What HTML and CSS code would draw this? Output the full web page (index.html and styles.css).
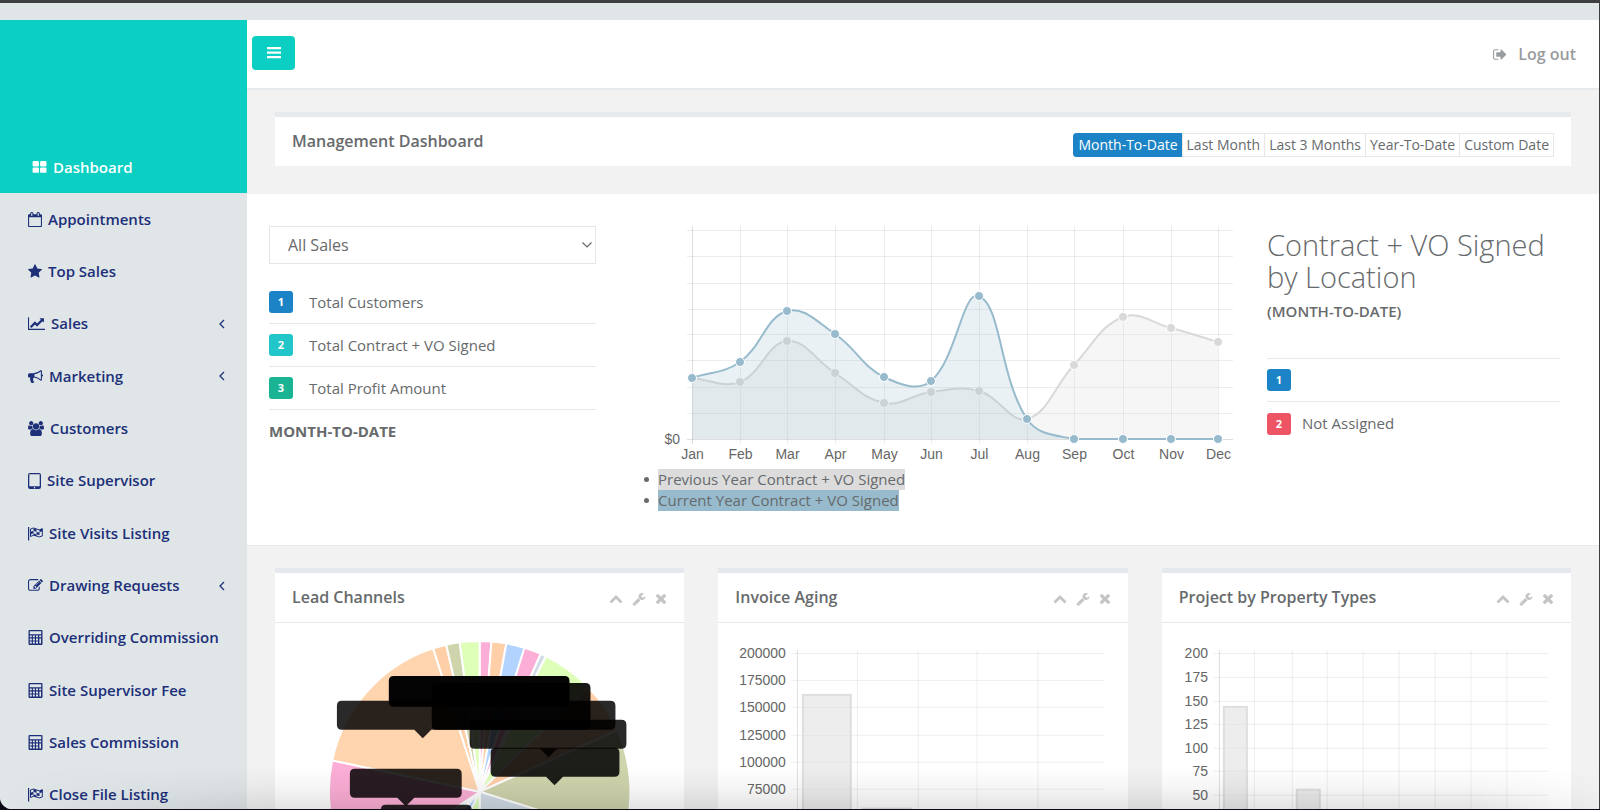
FILE: index.html
```html
<!DOCTYPE html>
<html lang="en">
<head>
<meta charset="utf-8">
<title>Management Dashboard</title>
<link rel="stylesheet" href="styles.css">
</head>
<body>
<svg class="sprite" aria-hidden="true">
  <symbol id="i-th" viewBox="0 0 1792 1792"><path d="M832 1024v384q0 52-38 90t-90 38h-512q-52 0-90-38t-38-90v-384q0-52 38-90t90-38h512q52 0 90 38t38 90zm0-768v384q0 52-38 90t-90 38h-512q-52 0-90-38t-38-90v-384q0-52 38-90t90-38h512q52 0 90 38t38 90zm896 768v384q0 52-38 90t-90 38h-512q-52 0-90-38t-38-90v-384q0-52 38-90t90-38h512q52 0 90 38t38 90zm0-768v384q0 52-38 90t-90 38h-512q-52 0-90-38t-38-90v-384q0-52 38-90t90-38h512q52 0 90 38t38 90z"/></symbol>
  <symbol id="i-calendar" viewBox="0 0 1664 1792"><path fill-rule="evenodd" d="M128 1664h1408V640H128zM1664 384v1280q0 52-38 90t-90 38H128q-52 0-90-38t-38-90V384q0-52 38-90t90-38h128v-96q0-66 47-113T416 0h64q66 0 113 47t47 113v96h384v-96q0-66 47-113t113-47h64q66 0 113 47t47 113v96h128q52 0 90 38t38 90zM384 160v288q0 32 32 32h64q32 0 32-32V160q0-32-32-32h-64q-32 0-32 32zm768 0v288q0 32 32 32h64q32 0 32-32V160q0-32-32-32h-64q-32 0-32 32z"/></symbol>
  <symbol id="i-star" viewBox="64 0 1664 1792"><path d="M1728 647q0 22-26 48l-363 354 86 500q1 7 1 20 0 21-10.500 35.500t-30.500 14.500q-19 0-40-12l-449-236-449 236q-22 12-40 12-21 0-31.500-14.500t-10.500-35.500q0-6 2-20l86-500-364-354q-25-27-25-48 0-37 56-46l502-73 225-455q19-41 49-41t49 41l225 455 502 73q56 9 56 46z"/></symbol>
  <symbol id="i-line" viewBox="0 0 2048 1792"><path d="M2048 1536v128h-2048v-1536h128v1408h1920zm-128-1248v435q0 21-19.500 29.500t-35.500-7.500l-121-121-633 633q-10 10-23 10t-23-10l-233-233-416 416-192-192 585-585q10-10 23-10t23 10l233 233 464-464-121-121q-16-16-7.500-35.500t29.500-19.500h435q14 0 23 9t9 23z"/></symbol>
  <symbol id="i-horn" viewBox="0 0 1792 1792"><path d="M1664 640q53 0 90.500 37.500t37.500 90.500-37.500 90.500-90.500 37.500v384q0 52-38 90t-90 38q-417-347-812-380-58 19-91 66t-31 100.500 40 92.500q-20 33-23 65.500t6 58 33.500 55 48 50 61.500 50.500q-29 58-111.500 83t-168.500 11.500-132-55.500q-7-23-29.500-87.500t-32-94.500-23-89-15-101 3.500-98.500 22-110.500h-122q-66 0-113-47t-47-113v-192q0-66 47-113t113-47h480q435 0 896-384 52 0 90 38t38 90v384zm-128 604v-954q-394 302-768 343v270q377 42 768 341z"/></symbol>
  <symbol id="i-users" viewBox="0 0 1920 1792"><path d="M593 896q-162 5-265 128h-134q-82 0-138-40.500t-56-118.500q0-353 124-353 6 0 43.500 21t97.500 42.500 119 21.500q67 0 133-23-5 37-5 66 0 139 81 256zm1071 637q0 120-73 189.500t-194 69.500h-874q-121 0-194-69.500t-73-189.500q0-53 3.500-103.500t14-109 26.500-108.500 43-97.500 62-81 85.500-53.500 111.500-20q10 0 43 21.500t73 48 107 48 135 21.500 135-21.500 107-48 73-48 43-21.500q61 0 111.500 20t85.500 53.500 62 81 43 97.500 26.500 108.500 14 109 3.500 103.500zm-1024-1277q0 106-75 181t-181 75-181-75-75-181 75-181 181-75 181 75 75 181zm704 384q0 159-112.500 271.500t-271.500 112.500-271.500-112.500-112.500-271.500 112.500-271.500 271.500-112.500 271.500 112.500 112.500 271.500zm576 225q0 78-56 118.500t-138 40.500h-134q-103-123-265-128 81-117 81-256 0-29-5-66 66 23 133 23 59 0 119-21.500t97.500-42.500 43.500-21q124 0 124 353zm-128-609q0 106-75 181t-181 75-181-75-75-181 75-181 181-75 181 75 75 181z"/></symbol>
  <symbol id="i-tablet" viewBox="0 0 13 16"><path fill-rule="evenodd" d="M2 0h9q2 0 2 2v12q0 2-2 2H2q-2 0-2-2V2q0-2 2-2zM1.300 1.300v11.900h10.400V1.300zM6.500 13.900a.7.7 0 1 0 .01 0z"/></symbol>
  <symbol id="i-flag" viewBox="0 0 15 15"><path d="M.6 1v13.500" stroke="currentColor" stroke-width="1.200" fill="none"/><path d="M2.500 3q3-2 6 0t5.800-.3v7.300q-3 1.800-5.800 0t-6 .5z" fill="none" stroke="currentColor"/><path d="M5.500 2.200q1.500 0 3 1v2.700q-1.500-1-3-1zM8.500 5.700q1.500.8 3 .5v2.700q-1.500.4-3-.6zM2.500 5.800q1.500-.8 3-.9v2.700q-1.500.1-3 .9zM11.500 3.500l2.800-.9v2.700l-2.800.9zM5.500 7.600q1.500 0 3 .8v2q-1.500-.9-3-.8z"/></symbol>
  <symbol id="i-edit" viewBox="0 0 1792 1792"><path d="M888 1184l116-116-152-152-116 116v56h96v96h56zm440-720q-16-16-33 1l-350 350q-17 17-1 33t33-1l350-350q17-17 1-33zm80 594v190q0 119-84.500 203.500t-203.500 84.500h-832q-119 0-203.500-84.500t-84.500-203.500v-832q0-119 84.500-203.500t203.500-84.500h832q63 0 117 25 15 7 18 23 3 17-9 29l-49 49q-14 14-32 8-23-6-45-6h-832q-66 0-113 47t-47 113v832q0 66 47 113t113 47h832q66 0 113-47t47-113v-126q0-13 9-22l64-64q15-15 35-7t20 29zm-96-738l288 288-672 672h-288v-288zm444 132l-92 92-288-288 92-92q28-28 68-28t68 28l152 152q28 28 28 68t-28 68z"/></symbol>
  <symbol id="i-calc" viewBox="0 0 14 15"><path fill-rule="evenodd" d="M1 0h12q1 0 1 1v13q0 1-1 1H1q-1 0-1-1V1q0-1 1-1zM1.300 1.300v2.900h11.400V1.300zM1.300 5.400v1.900h2V5.400zM4.400 5.400v1.900h2V5.400zM7.500 5.400v1.900h2V5.400zM10.700 5.400v1.900h2V5.400zM1.300 8.500v1.900h2V8.500zM4.400 8.500v1.900h2V8.500zM7.500 8.500v1.900h2V8.500zM10.900 8.500v5h1.600v-5zM1.300 11.600v1.900h2v-1.900zM4.400 11.600v1.900h2v-1.900zM7.500 11.600v1.900h2v-1.900z"/></symbol>
  <symbol id="i-left" viewBox="0 0 6 10"><path d="M5 1 1 5l4 4" fill="none" stroke="currentColor" stroke-width="1.300"/></symbol>
  <symbol id="i-bars" viewBox="0 0 14 12"><path d="M0 0h14v2.200H0zM0 4.500h14v2.200H0zM0 9h14v2.200H0z"/></symbol>
  <symbol id="i-out" viewBox="64 0 1664 1792"><path d="M704 1440q0 4 1 20t.5 26.500-3 23.500-10 19.500-20.500 6.500h-320q-119 0-203.500-84.500t-84.500-203.500v-704q0-119 84.500-203.500t203.500-84.500h320q13 0 22.500 9.500t9.500 22.500q0 4 1 20t.5 26.500-3 23.500-10 19.500-20.500 6.500h-320q-66 0-113 47t-47 113v704q0 66 47 113t113 47h312l11.500 1 11.500 3 8 5.500 7 9 2 13.500zm928-544q0 26-19 45l-544 544q-19 19-45 19t-45-19-19-45v-288h-448q-26 0-45-19t-19-45v-384q0-26 19-45t45-19h448v-288q0-26 19-45t45-19 45 19l544 544q19 19 19 45z"/></symbol>
  <symbol id="i-up" viewBox="0 0 14 14"><path d="M1.500 10.500 7 5l5.500 5.500" fill="none" stroke="currentColor" stroke-width="2.800"/></symbol>
  <symbol id="i-wrench" viewBox="0 0 1792 1792"><path d="M448 1472q0-26-19-45t-45-19-45 19-19 45 19 45 45 19 45-19 19-45zm644-420l-682 682q-37 37-90 37-52 0-91-37l-106-108q-38-36-38-90 0-53 38-91l681-681q39 98 114.500 173.500t173.500 114.500zm634-435q0 39-23 106-47 134-164.500 217.500t-258.500 83.500q-185 0-316.500-131.500t-131.500-316.500 131.500-316.500 316.500-131.500q58 0 121.500 16.500t107.500 46.500q16 11 16 28t-16 28l-293 169v224l193 107q5-3 79-48.500t135.500-81 70.500-35.500q15 0 23.500 10t8.500 25z"/></symbol>
  <symbol id="i-times" viewBox="256 256 1280 1408"><path d="M1490 1322q0 40-28 68l-136 136q-28 28-68 28t-68-28l-294-294-294 294q-28 28-68 28t-68-28l-136-136q-28-28-28-68t28-68l294-294-294-294q-28-28-28-68t28-68l136-136q28-28 68-28t68 28l294 294 294-294q28-28 68-28t68 28l136 136q28 28 28 68t-28 68l-294 294 294 294q28 28 28 68z"/></symbol>
</svg>

<div class="window">
  <div class="strip"></div>
  <div class="app">
    <nav class="sidebar">
      <div class="brand">
        <a class="nav-link active" href="#"><svg class="icon w15"><use href="#i-th"/></svg>Dashboard</a>
      </div>
      <ul class="nav-list">
        <li><a class="nav-link" href="#"><svg class="icon w14"><use href="#i-calendar"/></svg>Appointments</a></li>
        <li><a class="nav-link" href="#"><svg class="icon w14"><use href="#i-star"/></svg>Top Sales</a></li>
        <li><a class="nav-link" href="#"><svg class="icon w17"><use href="#i-line"/></svg>Sales<svg class="arrow"><use href="#i-left"/></svg></a></li>
        <li><a class="nav-link" href="#"><svg class="icon w15"><use href="#i-horn"/></svg>Marketing<svg class="arrow"><use href="#i-left"/></svg></a></li>
        <li><a class="nav-link" href="#"><svg class="icon w16"><use href="#i-users"/></svg>Customers</a></li>
        <li><a class="nav-link" href="#"><svg class="icon w13"><use href="#i-tablet"/></svg>Site Supervisor</a></li>
        <li><a class="nav-link" href="#"><svg class="icon w15"><use href="#i-flag"/></svg>Site Visits Listing</a></li>
        <li><a class="nav-link" href="#"><svg class="icon w15"><use href="#i-edit"/></svg>Drawing Requests<svg class="arrow"><use href="#i-left"/></svg></a></li>
        <li><a class="nav-link" href="#"><svg class="icon w15"><use href="#i-calc"/></svg>Overriding Commission</a></li>
        <li><a class="nav-link" href="#"><svg class="icon w15"><use href="#i-calc"/></svg>Site Supervisor Fee</a></li>
        <li><a class="nav-link" href="#"><svg class="icon w15"><use href="#i-calc"/></svg>Sales Commission</a></li>
        <li><a class="nav-link" href="#"><svg class="icon w15"><use href="#i-flag"/></svg>Close File Listing</a></li>
      </ul>
    </nav>

    <main class="main">
      <header class="topbar">
        <button class="menu-btn" type="button" aria-label="Toggle menu"><svg><use href="#i-bars"/></svg></button>
        <a class="logout" href="#"><svg><use href="#i-out"/></svg>Log out</a>
      </header>

      <section class="heading">
        <div class="heading-panel">
          <h1>Management Dashboard</h1>
          <div class="range">
            <button type="button" class="on">Month-To-Date</button><button type="button">Last Month</button><button type="button">Last 3 Months</button><button type="button">Year-To-Date</button><button type="button">Custom Date</button>
          </div>
        </div>
      </section>

      <section class="summary">
        <div class="totals">
          <div class="select-wrap">
            <select aria-label="Sales filter"><option>All Sales</option></select>
            <svg viewBox="0 0 10 6"><path d="M.5.500 5 5 9.500.5" fill="none" stroke="currentColor" stroke-width="1.200"/></svg>
          </div>
          <ul class="rank">
            <li><span class="badge blue">1</span>Total Customers</li>
            <li><span class="badge cyan">2</span>Total Contract + VO Signed</li>
            <li><span class="badge green">3</span>Total Profit Amount</li>
          </ul>
          <strong class="period">MONTH-TO-DATE</strong>
        </div>
        <div class="trend">
          <svg id="trend" viewBox="0 0 605 244"></svg>
          <ul class="legend">
            <li><span class="prev">Previous Year Contract + VO Signed</span></li>
            <li><span class="cur">Current Year Contract + VO Signed</span></li>
          </ul>
        </div>
        <div class="location">
          <h2>Contract + VO Signed by Location</h2>
          <strong class="period">(MONTH-TO-DATE)</strong>
          <ul class="rank">
            <li><span class="badge blue">1</span></li>
            <li><span class="badge red">2</span>Not Assigned</li>
          </ul>
        </div>
      </section>

      <section class="cards">
        <article class="card">
          <header><h3>Lead Channels</h3><div class="tools"><button type="button" aria-label="Collapse"><svg><use href="#i-up"/></svg></button><button type="button" aria-label="Settings"><svg><use href="#i-wrench"/></svg></button><button type="button" aria-label="Close"><svg class="x"><use href="#i-times"/></svg></button></div></header>
          <svg id="pie" viewBox="0 0 410 330"></svg>
        </article>
        <article class="card">
          <header><h3>Invoice Aging</h3><div class="tools"><button type="button" aria-label="Collapse"><svg><use href="#i-up"/></svg></button><button type="button" aria-label="Settings"><svg><use href="#i-wrench"/></svg></button><button type="button" aria-label="Close"><svg class="x"><use href="#i-times"/></svg></button></div></header>
          <svg id="aging" viewBox="0 0 410 330"></svg>
        </article>
        <article class="card">
          <header><h3>Project by Property Types</h3><div class="tools"><button type="button" aria-label="Collapse"><svg><use href="#i-up"/></svg></button><button type="button" aria-label="Settings"><svg><use href="#i-wrench"/></svg></button><button type="button" aria-label="Close"><svg class="x"><use href="#i-times"/></svg></button></div></header>
          <svg id="types" viewBox="0 0 410 330"></svg>
        </article>
      </section>
    </main>
  </div>
  <div class="shade"></div>
</div>
<script src="charts.js"></script>
</body>
</html>
```

FILE: styles.css
```css
* { box-sizing: border-box; }
html, body { height: 100%; }
body {
  margin: 0;
  background: #0c0a14;
  color: #676a6c;
  font: 15px/21px "Open Sans", "Noto Sans", sans-serif;
  overflow: hidden;
}
ul { list-style: none; margin: 0; padding: 0; }
h1, h2, h3 { margin: 0; }
a { text-decoration: none; color: inherit; }
button { font: inherit; cursor: pointer; }
svg { fill: currentColor; }
.sprite { position: absolute; width: 0; height: 0; }

.window {
  position: relative;
  display: flex;
  flex-direction: column;
  height: calc(100vh - 1px);
  border-top: 3px solid #3e3d40;
  border-right: 1px solid #3e3d40;
  border-bottom-left-radius: 12px;
  background: #e0e6e8;
  overflow: hidden;
}
.strip { flex: none; height: 17px; }
.app { display: flex; flex: 1; min-height: 0; }

.sidebar { display: flex; flex-direction: column; flex: none; width: 247px; background: #e0e6e8; }
.brand {
  display: flex;
  align-items: flex-end;
  height: 173px;
  padding: 0 0 13px 4px;
  background: #0bcfc3;
}
.nav-list { display: flex; flex-direction: column; justify-content: space-between; flex: 1; padding: 13px 0 1px; }
.nav-link {
  display: flex;
  align-items: center;
  height: 26px;
  padding: 0 22px 0 28px;
  color: #1c2f78;
  font-weight: 600;
}
.nav-link.active { color: #fff; }
.icon { height: 15px; margin-right: 6px; }
.w13 { width: 13px; height: 16px; }
.w14 { width: 14px; }
.w15 { width: 15px; }
.w16 { width: 16px; }
.w17 { width: 17px; }
.arrow { width: 6px; height: 10px; margin-left: auto; }

.main { flex: 1; min-width: 0; background: #f2f2f2; overflow: hidden; }
.topbar {
  display: flex;
  justify-content: space-between;
  height: 70px;
  padding: 16px 23px 0 5px;
  background: #fff;
  border-bottom: 2px solid #e7eaec;
}
.menu-btn {
  display: flex;
  align-items: center;
  justify-content: center;
  width: 43px;
  height: 34px;
  padding: 0;
  border: 0;
  border-radius: 4px;
  background: #0bcfc3;
  color: #fff;
}
.menu-btn svg { width: 14px; height: 12px; }
.logout { display: flex; align-items: center; gap: 11px; height: 36px; color: #999c9e; font-size: 16px; font-weight: 600; }
.logout svg { width: 14px; height: 15px; }

.heading { padding: 22px 28px 28px; }
.heading-panel {
  display: flex;
  align-items: center;
  justify-content: space-between;
  height: 54px;
  padding: 0 17px;
  background: #fff;
  border-top: 5px solid #e7eaec;
}
h1, h3 { padding-bottom: 2px; font-size: 16px; line-height: 20px; font-weight: 600; }
.range { display: flex; padding-top: 7px; }
.range button {
  height: 24px;
  padding: 0 4px;
  margin-left: -1px;
  border: 1px solid #e7e7e7;
  background: #fff;
  color: #676a6c;
  font-size: 14px;
  line-height: 20px;
}
.range .on { background: #1c84c6; border-color: #1c84c6; color: #fff; border-radius: 3px 0 0 3px; }

.summary {
  display: grid;
  grid-template-columns: 327fr 605fr 293fr;
  gap: 33px;
  height: 352px;
  padding: 26px 39px 0 22px;
  background: #fff;
  border-bottom: 1px solid #e7eaec;
}
.totals { padding-top: 6px; }
.select-wrap { position: relative; color: #676a6c; }
.select-wrap select {
  display: block;
  width: 100%;
  height: 38px;
  padding: 0 18px;
  border: 1px solid #e5e6e7;
  border-radius: 0;
  background: #fff;
  color: inherit;
  font: inherit;
  font-size: 16px;
  appearance: none;
}
.select-wrap svg { position: absolute; right: 4px; top: 16px; width: 10px; height: 6px; }
.totals .rank { padding-top: 17px; }
.rank li { display: flex; align-items: center; height: 43px; border-bottom: 1px solid #e7eaec; }
.badge {
  width: 24px;
  height: 22px;
  margin-right: 16px;
  border-radius: 3px;
  color: #fff;
  font-size: 11px;
  line-height: 22px;
  font-weight: 700;
  text-align: center;
}
.blue { background: #1c84c6; }
.cyan { background: #23c6c8; }
.green { background: #1ab394; }
.red { background: #ed5565; }
.period { display: block; font-weight: 700; }
.totals .period { padding-top: 11px; }

.trend svg { display: block; width: 100%; }
.legend { padding: 5px 0 0 15px; }
.legend li { display: flex; align-items: center; gap: 9px; height: 21px; }
.legend li::before { content: ""; width: 5px; height: 5px; border-radius: 50%; background: #676a6c; }
.prev { background: #dcdcdc; }
.cur { background: #97bbcd; }

.location { padding-top: 9px; }
.location h2 { font-size: 29px; line-height: 32px; font-weight: 300; }
.location .period { padding-top: 8px; font-weight: 600; }
.location .rank { margin-top: 36px; border-top: 1px solid #e7eaec; }
.location .rank li:last-child { border: 0; }
.location .badge { margin-right: 11px; }

.cards { display: grid; grid-template-columns: repeat(3, 1fr); gap: 34px; padding: 22px 28px; }
.card { background: #fff; border-top: 5px solid #e5e9ee; }
.card header {
  display: flex;
  align-items: center;
  justify-content: space-between;
  height: 50px;
  padding: 0 17px;
  border-bottom: 1px solid #e7eaec;
}
.card > svg { display: block; width: 100%; }
.tools { display: flex; gap: 9px; padding-top: 3px; }
.tools button { display: flex; align-items: center; padding: 0; border: 0; background: none; color: #c4c4c4; }
.tools svg { width: 14px; height: 14px; }
.tools .x { width: 12px; height: 12px; }

svg text { font: 14px "Liberation Sans", Arial, sans-serif; fill: #666; }

.shade {
  position: absolute;
  inset: auto 0 0 0;
  height: 42px;
  background: linear-gradient(rgba(0, 0, 0, 0), rgba(0, 0, 0, .04) 50%, rgba(0, 0, 0, .11));
  mask-image: linear-gradient(90deg, transparent, #000 280px, #000 calc(100% - 120px), rgba(0, 0, 0, .2));
  pointer-events: none;
}
```

FILE: charts.js
```js
const NS = "http://www.w3.org/2000/svg";
function add(parent, tag, attrs, text) {
  const el = document.createElementNS(NS, tag);
  for (const k in attrs) el.setAttribute(k, attrs[k]);
  if (text !== undefined) el.textContent = text;
  parent.appendChild(el);
  return el;
}
function line(parent, x1, y1, x2, y2, axis) {
  add(parent, "path", { d: `M${x1} ${y1}L${x2} ${y2}`, stroke: axis ? "rgba(0,0,0,.13)" : "rgba(0,0,0,.07)", fill: "none" });
}

/* Smoothed path, tension 0.4, handles clamped to the plot area */
function spline(pts, top, bottom) {
  const clamp = v => Math.min(bottom, Math.max(top, v));
  const c = pts.map((p, i) => {
    const a = pts[i - 1] || p, b = pts[i + 1] || p;
    const d1 = Math.hypot(p[0] - a[0], p[1] - a[1]), d2 = Math.hypot(b[0] - p[0], b[1] - p[1]);
    const f1 = 0.4 * d1 / (d1 + d2), f2 = 0.4 * d2 / (d1 + d2);
    return {
      before: [p[0] - f1 * (b[0] - a[0]), clamp(p[1] - f1 * (b[1] - a[1]))],
      after: [p[0] + f2 * (b[0] - a[0]), clamp(p[1] + f2 * (b[1] - a[1]))]
    };
  });
  return "M" + pts[0] + pts.slice(1).map((p, i) => `C${c[i].after} ${c[i + 1].before} ${p}`).join("");
}

/* Yearly trend */
{
  const svg = document.getElementById("trend");
  const months = ["Jan", "Feb", "Mar", "Apr", "May", "Jun", "Jul", "Aug", "Sep", "Oct", "Nov", "Dec"];
  const xs = [63.5, 111.5, 158.5, 206.5, 255.5, 302.5, 350.5, 398.5, 445.5, 494.5, 542.5, 589.5];
  const ys = [10.5, 36.5, 63.5, 89.5, 114.5, 140.5, 167.5, 193.5, 219.5];
  ys.forEach((y, i) => line(svg, 58, y, 604, y, i === 8));
  xs.forEach((x, i) => line(svg, x, 6, x, 224, i === 0));
  const draw = (vals, color, fill) => {
    const pts = vals.map((v, i) => [xs[i] - 0.5, v]);
    const d = spline(pts, 6, 219);
    add(svg, "path", { d: `${d}L589 219L63 219Z`, fill });
    add(svg, "path", { d, fill: "none", stroke: color, "stroke-width": 2 });
    pts.forEach(p => add(svg, "circle", { cx: p[0], cy: p[1], r: 4.5, fill: color, stroke: "#fff", "stroke-width": 1 }));
  };
  draw([158, 162, 121, 153, 183, 172, 171, 199, 145, 97, 108, 122], "#d9d9d9", "rgba(220,220,220,.25)");
  draw([158, 142, 91, 114, 157, 161, 76, 199, 219, 219, 219, 219], "#97bbcd", "rgba(151,187,205,.2)");
  months.forEach((m, i) => add(svg, "text", { x: xs[i], y: 239, "text-anchor": "middle" }, m));
  add(svg, "text", { x: 51, y: 224, "text-anchor": "end" }, "$0");
}

/* Bar charts */
function bars(id, labels, ys, xs, labelX, list) {
  const svg = document.getElementById(id);
  ys.forEach((y, i) => {
    line(svg, xs[0] - 6, y, 387, y);
    add(svg, "text", { x: labelX, y: y + 5, "text-anchor": "end" }, labels[i]);
  });
  xs.forEach((x, i) => line(svg, x, 27, x, 330, i === 0));
  list.forEach(b => add(svg, "rect", { x: b[0] + 1, y: b[1] + 1, width: b[2] - 2, height: 330, fill: "rgba(220,220,220,.5)", stroke: "#dedede", "stroke-width": 2 }));
}
bars("aging", [200000, 175000, 150000, 125000, 100000, 75000],
  [30.5, 57.5, 84.5, 112.5, 139.5, 166.5], [79.5, 139.5, 200.5, 259.5, 320.5], 68,
  [[84, 71, 50], [144, 185, 50]]);
bars("types", [200, 175, 150, 125, 100, 75, 50],
  [30.5, 54.5, 78.5, 101.5, 125.5, 148.5, 172.5], [57.5, 92.5, 130.5, 165.5, 201.5, 237.5, 273.5, 309.5, 345.5], 46,
  [[61, 83, 25], [134, 166, 25]]);

/* Lead channels pie with its tooltips */
{
  const svg = document.getElementById("pie");
  const cx = 205, cy = 169, r = 151;
  const green = "#deffb8", pink = "#fcaed6", orange = "#ffd5b0", peach = "#ffcfa8", blue = "#b3d3ff", olive = "#cfd4ad", steel = "#d0dce6";
  const slices = [
    [4.5, pink], [10.2, peach], [17.3, blue], [23.9, pink], [26, steel], [46, green], [66, peach], [107.4, olive],
    [180, steel], [206, green], [222, blue], [229, green], [236, blue], [282, pink], [342, orange], [347.2, peach], [352.4, olive], [360, green]
  ];
  let from = 0;
  const pt = a => [cx + r * Math.sin(a * Math.PI / 180), cy - r * Math.cos(a * Math.PI / 180)];
  slices.forEach(([to, fill]) => {
    add(svg, "path", { d: `M${cx} ${cy}L${pt(from)}A${r} ${r} 0 0 1 ${pt(to)}Z`, fill, stroke: "#fff", "stroke-width": 2 });
    from = to;
  });
  const tip = (x, y, w, h, opacity, caret) => {
    const tail = caret ? `M${caret - 8.5} ${y + h}h17l-8.500 8.500z` : "";
    const d = `M${x + 5} ${y}h${w - 10}q5 0 5 5v${h - 10}q0 5-5 5h${10 - w}q-5 0-5-5v${10 - h}q0-5 5-5z${tail}`;
    add(svg, "path", { d, fill: `rgba(0,0,0,${opacity})` });
  };
  tip(62, 78, 279, 29, 0.84, 148);
  tip(195, 97, 157, 29, 0.84, 274);
  tip(216, 125, 129, 29, 0.86, 280);
  tip(157, 60, 159, 47, 0.9);
  tip(114, 53, 181, 31, 0.98);
  tip(75, 146, 112, 29, 0.84, 131);
  tip(106, 182, 91, 29, 0.84);
}
```
